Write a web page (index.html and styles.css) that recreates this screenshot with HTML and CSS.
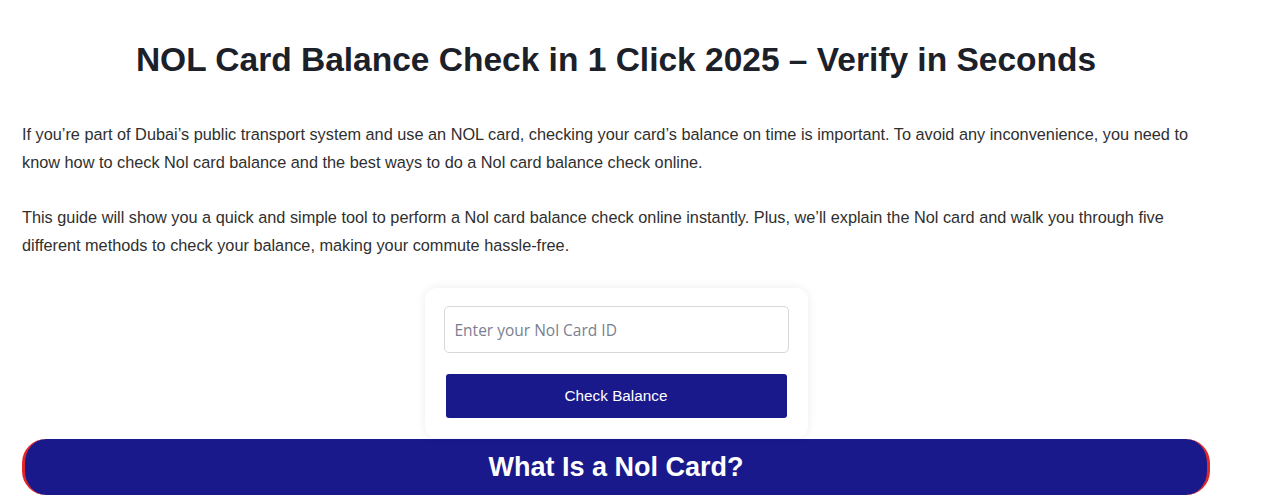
FILE: index.html
```html
<!DOCTYPE html>
<html>
  <head>
    <meta charset="utf-8" />
    <title>NOL Card Balance Check</title>
    <meta name="viewport" content="width=device-width, initial-scale=1" />
    <link rel="stylesheet" href="styles.css">
  </head>
  <body>
    <div class="page">
      <h1 class="title">NOL Card Balance Check in 1 Click 2025 – Verify in Seconds</h1>
      <p class="text">If you’re part of Dubai’s public transport system and use an NOL card, checking your card’s balance on time is important. To avoid any inconvenience, you need to know how to check Nol card balance and the best ways to do a Nol card balance check online.</p>
      <p class="text">This guide will show you a quick and simple tool to perform a Nol card balance check online instantly. Plus, we’ll explain the Nol card and walk you through five different methods to check your balance, making your commute hassle-free.</p>
      <div class="checker">
        <form class="checker-box" action="">
          <input class="card-id" type="text" placeholder="Enter your Nol Card ID" />
          <button class="check-btn" type="submit">Check Balance</button>
        </form>
      </div>
      <h2 class="banner">What Is a Nol Card?</h2>
    </div>
  </body>
</html>
```

FILE: styles.css
```css
body {
  margin: 0;
  background: #ffffff;
  font-family: "Liberation Sans", Arial, sans-serif;
  color: #2b2b2b;
}
.page {
  width: 1188px;
  margin-left: 22px;
  padding-top: 39px;
}
.title {
  margin: 0 0 39px 0;
  text-align: center;
  font-size: 33.5px;
  line-height: 42px;
  font-weight: bold;
  color: #1c2029;
}
.text {
  margin: 0 0 27px 0;
  font-size: 16.3px;
  line-height: 28px;
  color: #2f2f2f;
}
.checker {
  display: flex;
  justify-content: center;
  margin-top: 29px;
}
.checker-box {
  width: 345px;
  padding: 18px 19px 20px 19px;
  background: #ffffff;
  border-radius: 12px;
  box-shadow: 0 0 10px rgba(0, 0, 0, 0.08);
  display: flex;
  flex-direction: column;
  gap: 21px;
}
.card-id {
  box-sizing: border-box;
  width: 345px;
  height: 47px;
  padding: 0 10px;
  border: 1px solid #d8d8dc;
  border-radius: 5px;
  font-family: "Open Sans", "Noto Sans", sans-serif;
  font-size: 15.5px;
  color: #333;
}
.card-id::placeholder {
  color: #7a7f91;
}
.check-btn {
  width: 341px;
  height: 44px;
  margin-left: 2px;
  border: none;
  border-radius: 3px;
  background: #19198c;
  color: #ffffff;
  font-family: "Liberation Sans", Arial, sans-serif;
  font-size: 15.3px;
  cursor: pointer;
}
.banner {
  margin: 1px 0 0 0;
  height: 56px;
  line-height: 56px;
  background: #19198c;
  border-left: 3px solid #e0282a;
  border-right: 3px solid #e0282a;
  border-radius: 24px;
  color: #ffffff;
  text-align: center;
  font-size: 27px;
  font-weight: bold;
}
```
